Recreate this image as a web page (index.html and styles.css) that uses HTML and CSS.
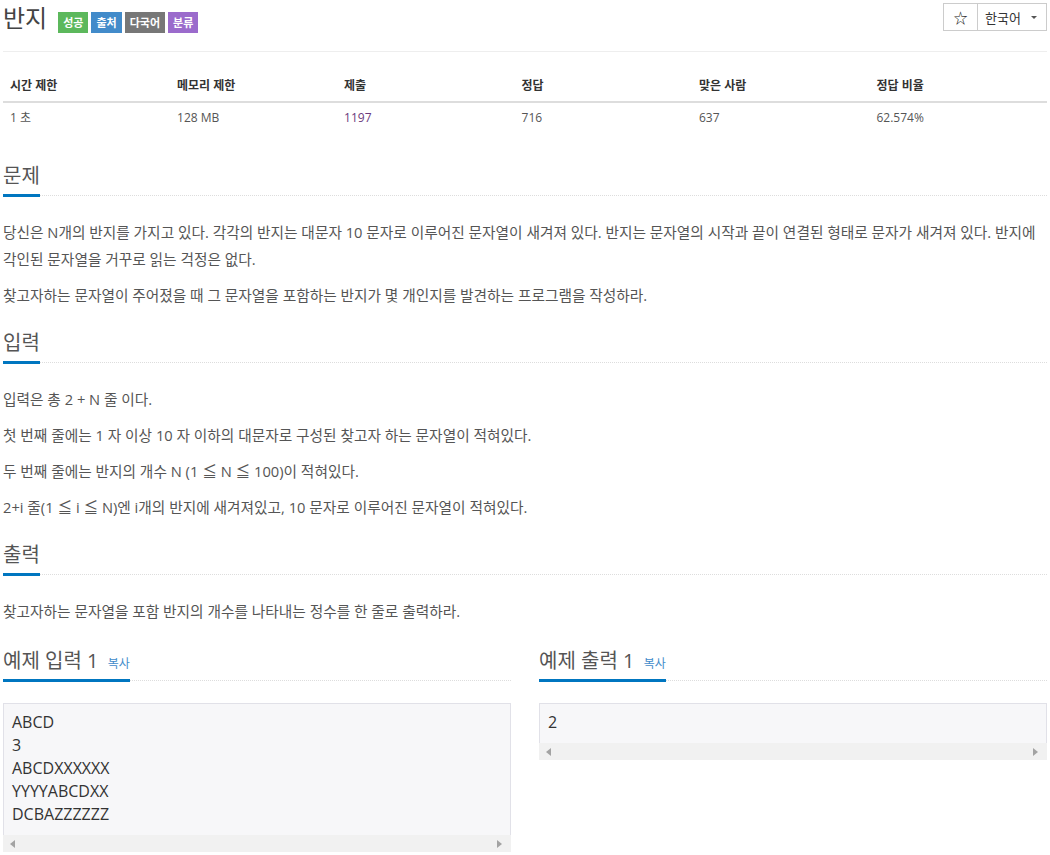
FILE: index.html
```html
<!DOCTYPE html>
<html lang="ko">
<head>
  <meta charset="UTF-8">
  <meta name="viewport" content="width=device-width, initial-scale=1.0">
  <title>반지</title>
  <link rel="stylesheet" href="styles.css">
</head>
<body>
  <div class="page">
    <div class="page-header">
      <h1 class="title">
        <span class="problem-title">반지</span>
        <span class="label label-success">성공</span>
        <span class="label label-source">출처</span>
        <span class="label label-lang">다국어</span>
        <span class="label label-tag">분류</span>
      </h1>
      <div class="btn-group">
        <button class="btn btn-star">☆</button>
        <button class="btn btn-lang">한국어 <span class="caret"></span></button>
      </div>
    </div>

    <table class="problem-info">
      <thead>
        <tr>
          <th class="w16">시간 제한</th>
          <th class="w16">메모리 제한</th>
          <th class="w17">제출</th>
          <th class="w17">정답</th>
          <th class="w17">맞은 사람</th>
          <th class="w17">정답 비율</th>
        </tr>
      </thead>
      <tbody>
        <tr>
          <td>1 초</td>
          <td>128 MB</td>
          <td><a class="visited" href="#">1197</a></td>
          <td>716</td>
          <td>637</td>
          <td>62.574%</td>
        </tr>
      </tbody>
    </table>

    <section class="problem-section">
      <div class="headline"><h2>문제</h2></div>
      <div class="problem-text">
        <p>당신은 N개의 반지를 가지고 있다. 각각의 반지는 대문자 10 문자로 이루어진 문자열이 새겨져 있다. 반지는 문자열의 시작과 끝이 연결된 형태로 문자가 새겨져 있다. 반지에 각인된 문자열을 거꾸로 읽는 걱정은 없다.</p>
        <p>찾고자하는 문자열이 주어졌을 때 그 문자열을 포함하는 반지가 몇 개인지를 발견하는 프로그램을 작성하라.</p>
      </div>
    </section>

    <section class="problem-section">
      <div class="headline"><h2>입력</h2></div>
      <div class="problem-text">
        <p>입력은 총 2 + N 줄 이다.</p>
        <p>첫 번째 줄에는 1 자 이상 10 자 이하의 대문자로 구성된 찾고자 하는 문자열이 적혀있다.</p>
        <p>두 번째 줄에는 반지의 개수 N (1 ≦ N ≦ 100)이 적혀있다.</p>
        <p>2+i 줄(1 ≦ i ≦ N)엔 i개의 반지에 새겨져있고, 10 문자로 이루어진 문자열이 적혀있다.</p>
      </div>
    </section>

    <section class="problem-section">
      <div class="headline"><h2>출력</h2></div>
      <div class="problem-text">
        <p>찾고자하는 문자열을 포함 반지의 개수를 나타내는 정수를 한 줄로 출력하라.</p>
      </div>
    </section>

    <div class="sample-row">
      <div class="sample-col">
        <div class="headline"><h2>예제 입력 1 <a class="copy" href="#">복사</a></h2></div>
        <div class="sample-box">
          <pre>ABCD
3
ABCDXXXXXX
YYYYABCDXX
DCBAZZZZZZ</pre>
          <div class="hscroll"><span class="arrow-left"></span><span class="arrow-right"></span></div>
        </div>
      </div>
      <div class="sample-col">
        <div class="headline"><h2>예제 출력 1 <a class="copy" href="#">복사</a></h2></div>
        <div class="sample-box">
          <pre>2</pre>
          <div class="hscroll"><span class="arrow-left"></span><span class="arrow-right"></span></div>
        </div>
      </div>
    </div>
  </div>
</body>
</html>
```

FILE: styles.css
```css
/* Base */
body {
  margin: 0;
  font-family: "Open Sans", "Noto Sans CJK KR", sans-serif;
  font-size: 14px;
  color: #555;
  background: #fff;
}

a {
  text-decoration: none;
}

.page {
  padding: 0 3px;
}

/* Header */
.page-header {
  display: flex;
  justify-content: space-between;
  align-items: flex-start;
  padding: 3px 0 18px;
  border-bottom: 1px solid #eee;
}

.title {
  display: flex;
  align-items: flex-start;
  margin: 0;
  font-size: 24px;
  font-weight: 400;
  line-height: 26px;
  color: #444;
}

.problem-title {
  margin: 2px 8px 0 0;
}

.label {
  margin: 9px 0 0 3px;
  padding: 0 5px;
  font-size: 11px;
  font-weight: 700;
  line-height: 21px;
  color: #fff;
}

.label-success { background: #5cb85c; }
.label-source { background: #428bca; }
.label-lang { background: #777; }
.label-tag { background: #9b6bcc; }

.btn-group {
  display: flex;
}

.btn {
  height: 28px;
  padding: 0;
  background: #fff;
  border: 1px solid #ccc;
  font-family: "Open Sans", "Noto Sans CJK KR", sans-serif;
  font-size: 13px;
  color: #333;
}

.btn-star {
  width: 35px;
  font-size: 14px;
  color: #222;
}

.btn-lang {
  width: 70px;
  margin-left: -1px;
  padding: 0 9px 0 7px;
  display: flex;
  align-items: center;
  justify-content: space-between;
}

.caret {
  width: 0;
  height: 0;
  border-left: 3px solid transparent;
  border-right: 3px solid transparent;
  border-top: 3px solid #555;
}

/* Info table */
.problem-info {
  width: 100%;
  border-collapse: collapse;
  margin: 18px 0 31px;
  font-size: 12px;
}

.problem-info th,
.problem-info td {
  text-align: left;
  line-height: 18px;
}

.problem-info th {
  padding: 7px 7px 6px;
  font-weight: 700;
  color: #333;
  border-bottom: 2px solid #ddd;
}

.problem-info td {
  padding: 6px 7px 7px;
}

.w16 { width: 16%; }
.w17 { width: 17%; }

.visited {
  color: #6b3a7d;
}

/* Sections */
.headline {
  display: flex;
  margin: 23px 0;
  border-bottom: 1px dotted #ddd;
}

.headline h2 {
  height: 22px;
  margin: 0 0 -2px;
  padding-bottom: 7px;
  font-size: 20px;
  font-weight: 400;
  line-height: 22px;
  color: #555;
  border-bottom: 3px solid #0076c0;
}

.problem-text p {
  margin: 0 0 9px;
  font-size: 14.7px;
  line-height: 27px;
}

/* Samples */
.sample-row {
  display: grid;
  grid-template-columns: 1fr 1fr;
  column-gap: 28px;
  margin-top: 25px;
}

.sample-col .headline {
  margin: 0 0 22px;
}

.copy {
  margin-left: 4px;
  font-size: 12px;
  line-height: 1;
  color: #428bca;
}

.sample-box {
  background: #f7f7f9;
  border: 1px solid #e1e1e8;
  border-bottom: 0;
}

.sample-box pre {
  margin: 0;
  padding: 7px 8px 9px;
  font-family: "Open Sans", sans-serif;
  font-size: 16px;
  line-height: 23px;
  color: #333;
}

.hscroll {
  display: flex;
  justify-content: space-between;
  align-items: center;
  height: 17px;
  margin: 0 -1px;
  padding: 0 9px 0 7px;
  background: #f1f1f1;
}

.arrow-left,
.arrow-right {
  width: 0;
  height: 0;
  border-top: 4px solid transparent;
  border-bottom: 4px solid transparent;
}

.arrow-left {
  border-right: 5px solid #a3a3a3;
}

.arrow-right {
  border-left: 5px solid #a3a3a3;
}
```
